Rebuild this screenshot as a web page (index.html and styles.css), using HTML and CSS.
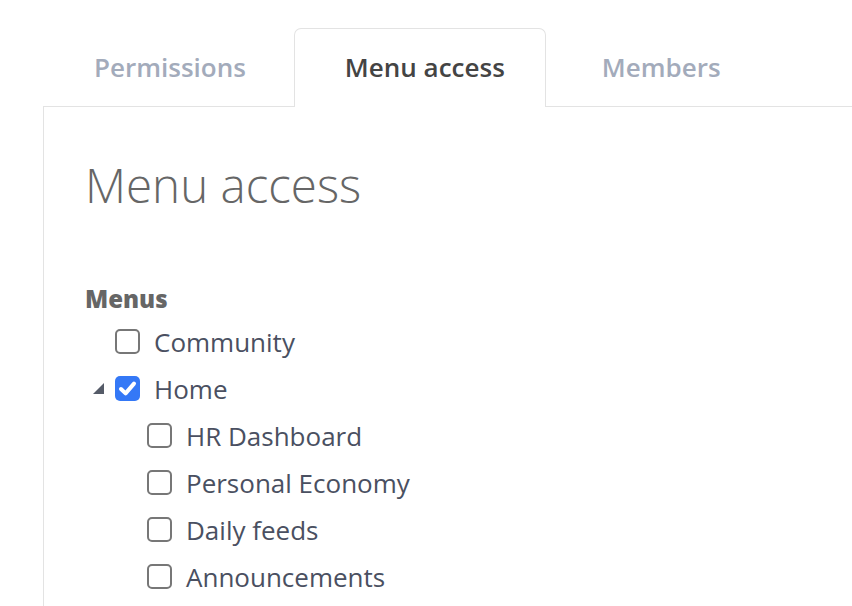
FILE: index.html
```html
<!DOCTYPE html>
<html lang="en">
<head>
<meta charset="utf-8">
<title>Menu access</title>
<link rel="stylesheet" href="styles.css">
</head>
<body>
<div class="page">
  <nav class="tabs">
    <div class="tab">Permissions</div>
    <div class="tab tab-active">Menu access</div>
    <div class="tab tab-members">Members</div>
  </nav>
  <section class="panel">
    <h1 class="title">Menu access</h1>
    <div class="group-label">Menus</div>
    <ul class="tree">
      <li>
        <div class="row">
          <span class="toggle"></span>
          <span class="box"></span>
          <span class="label">Community</span>
        </div>
      </li>
      <li>
        <div class="row">
          <span class="toggle"><span class="caret"></span></span>
          <span class="box box-checked">
            <svg viewBox="0 0 25 25" width="25" height="25"><path d="M6 13 L10.6 17.4 L19 7.6" fill="none" stroke="#fff" stroke-width="4" stroke-linecap="round" stroke-linejoin="round"/></svg>
          </span>
          <span class="label">Home</span>
        </div>
        <ul class="tree tree-sub">
          <li><div class="row"><span class="toggle"></span><span class="box"></span><span class="label">HR Dashboard</span></div></li>
          <li><div class="row"><span class="toggle"></span><span class="box"></span><span class="label">Personal Economy</span></div></li>
          <li><div class="row"><span class="toggle"></span><span class="box"></span><span class="label">Daily feeds</span></div></li>
          <li><div class="row"><span class="toggle"></span><span class="box"></span><span class="label">Announcements</span></div></li>
        </ul>
      </li>
    </ul>
  </section>
</div>
</body>
</html>
```

FILE: styles.css
```css
* { box-sizing: border-box; }

html, body {
  margin: 0;
  padding: 0;
  background: #ffffff;
  font-family: "Open Sans", "Noto Sans", sans-serif;
  overflow: hidden;
}

.page {
  padding: 28px 0 0 43px;
  height: 606px;
  display: flex;
  flex-direction: column;
}

.tabs {
  display: flex;
  position: relative;
  z-index: 1;
}

.tab {
  height: 78px;
  padding: 0 47px 2px 50px;
  display: flex;
  align-items: center;
  justify-content: center;
  font-size: 26px;
  font-weight: 600;
  color: #a3abbb;
  border: 1px solid transparent;
  border-bottom: none;
  border-radius: 7px 7px 0 0;
  margin-bottom: -1px;
  background: transparent;
}

.tab-active {
  color: #444444;
  border-color: #e3e3e3;
  background: #ffffff;
  height: 79px;
  padding-right: 40px;
}

.tab-members {
  padding-left: 55px;
}

.panel {
  flex: 1;
  border-top: 1px solid #e3e3e3;
  border-left: 1px solid #e3e3e3;
  padding: 54px 0 0 41px;
}

.title {
  margin: 0;
  font-size: 47.5px;
  line-height: 47px;
  font-weight: 300;
  color: #666666;
}

.group-label {
  margin-top: 76px;
  font-size: 24px;
  line-height: 30px;
  font-weight: 800;
  color: #666666;
}

.tree {
  list-style: none;
  margin: 4px 0 0 0;
  padding: 0;
}

.tree-sub {
  margin: 0;
  padding-left: 32px;
}

.row {
  height: 47px;
  display: flex;
  align-items: center;
}

.toggle {
  width: 30px;
  height: 25px;
  display: flex;
  align-items: center;
  justify-content: flex-start;
  padding-left: 8px;
}

.caret {
  width: 0;
  height: 0;
  border-style: solid;
  border-width: 0 0 11px 11px;
  border-color: transparent transparent #555b68 transparent;
}

.box {
  width: 25px;
  height: 25px;
  border: 2px solid #777777;
  border-radius: 5px;
  flex: none;
  display: flex;
  align-items: center;
  justify-content: center;
}

.box-checked {
  background: #3478f6;
  border: none;
}

.label {
  margin-left: 14px;
  font-size: 26px;
  color: #4a5061;
}
```
